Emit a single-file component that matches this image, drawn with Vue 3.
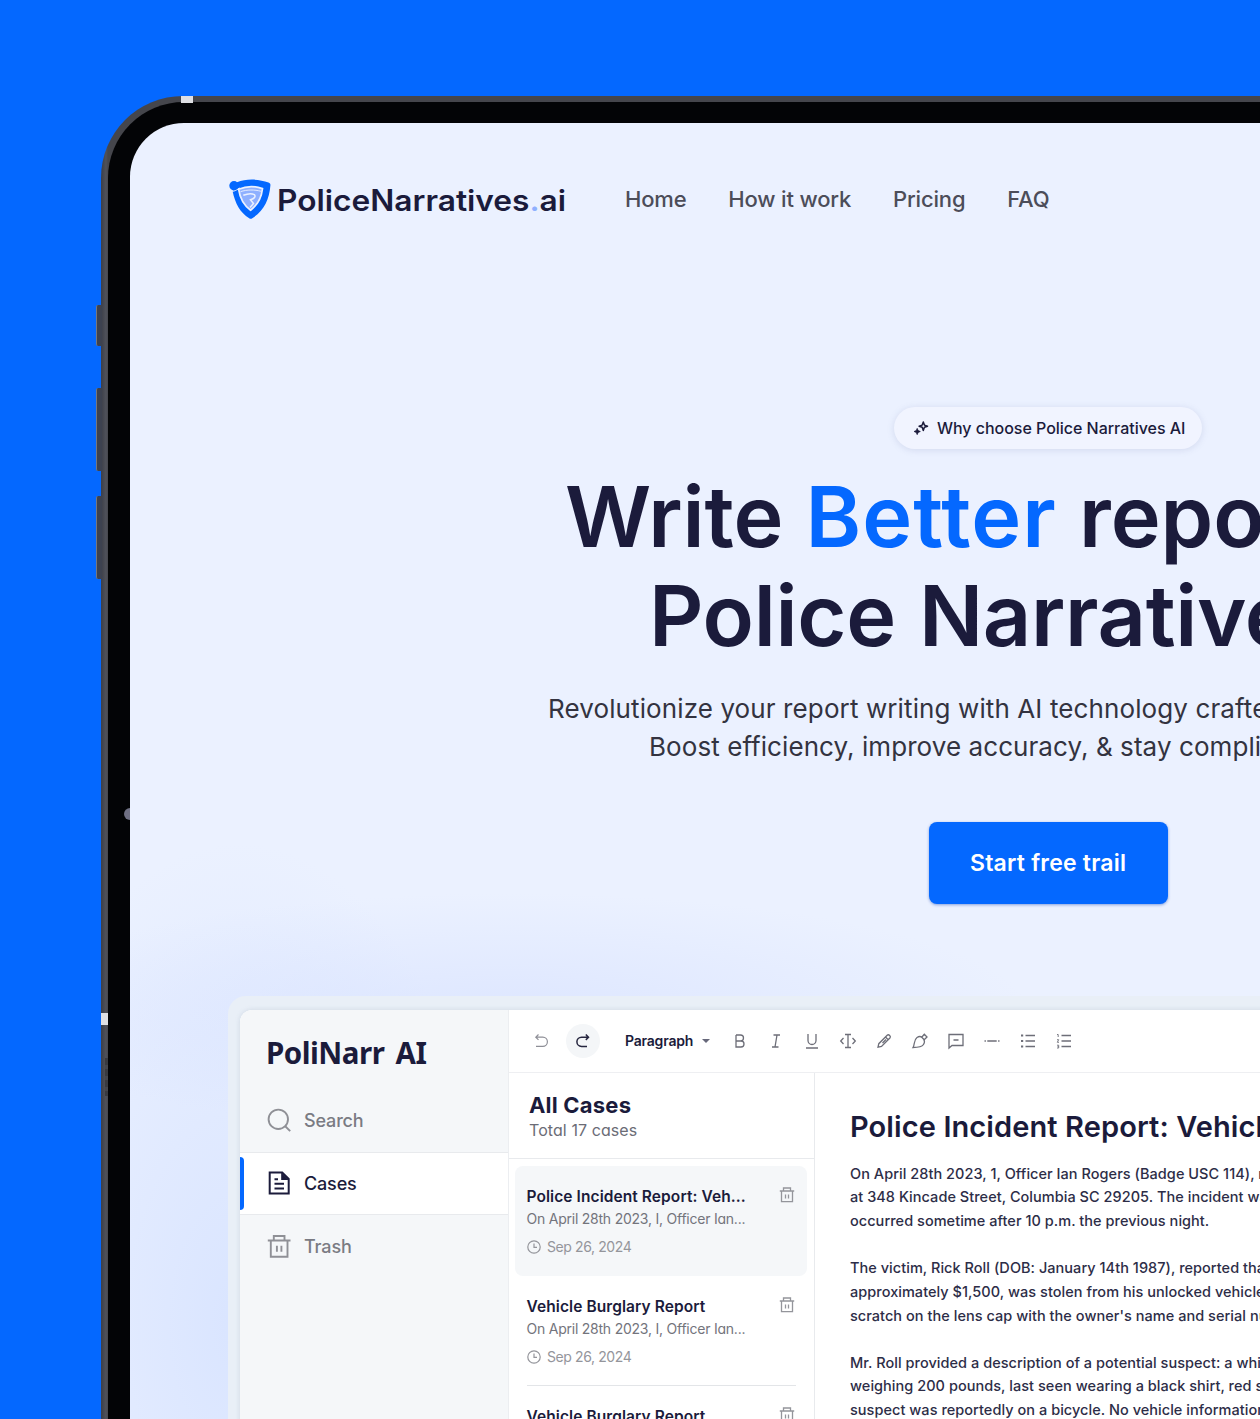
<script setup>
const links = ['Home', 'How it work', 'Pricing', 'FAQ']

const cases = [
  { title: 'Police Incident Report: Veh...', active: true },
  { title: 'Vehicle Burglary Report', active: false },
  { title: 'Vehicle Burglary Report', active: false },
]

const paragraphs = [
  [
    'On April 28th 2023, 1, Officer Ian Rogers (Badge USC 114), responded',
    'at 348 Kincade Street, Columbia SC 29205. The incident was reported',
    'occurred sometime after 10 p.m. the previous night.',
  ],
  [
    'The victim, Rick Roll (DOB: January 14th 1987), reported that a camera',
    'approximately $1,500, was stolen from his unlocked vehicle. It has a',
    "scratch on the lens cap with the owner's name and serial number.",
  ],
  [
    'Mr. Roll provided a description of a potential suspect: a white male',
    'weighing 200 pounds, last seen wearing a black shirt, red shorts. The',
    'suspect was reportedly on a bicycle. No vehicle information was given.',
  ],
]
</script>

<template>
  <div class="stage">
    <div class="tablet">
      <i class="side-button first"></i>
      <i class="side-button second"></i>
      <i class="side-button third"></i>
      <i class="antenna top"></i>
      <i class="antenna left"></i>
      <i class="vents"></i>
      <div class="bezel">
        <i class="camera"></i>
        <div class="screen">
          <header class="nav">
            <div class="brand">
              <svg width="42" height="40" viewBox="0 0 42 40">
                <path d="M8 3.200C17 -.4 30 -.2 39.500 3.600C41 4.200 41.600 5 41.400 6.600C40.400 20.500 34.500 32.500 23.300 39.200C22.200 39.900 21.200 39.900 20.200 39.200C11 33.500 6.200 24.500 3.600 12.200Z" fill="#0468ff" />
                <path d="M1 12.500C6 12.500 8 10.500 11 9" fill="none" stroke="#ebf1ff" stroke-width="1.300" />
                <path d="M9.600 10.200C17.500 6.900 26 6.900 33.500 9.600C32.500 18.500 28.500 26 21.600 31.200C14.800 26.500 11 19.500 9.600 10.200Z" fill="#8fb0ff" stroke="#ebf1ff" stroke-width="1.700" />
                <circle cx="5" cy="6.800" r="4.700" fill="#0468ff" />
                <path d="M11.500 12.700C18 10.500 25.500 10.500 32 12.300" fill="none" stroke="#ebf1ff" stroke-width=".9" />
                <path d="M14.300 16.300C18 14.800 23 14.400 25.300 15.600C27 17.600 25.500 19.600 21.500 20.800L24.500 24.500L21 28.500" fill="none" stroke="#ebf1ff" stroke-width="1.500" />
              </svg>
              <span class="brand-name">PoliceNarratives<b>.</b>ai</span>
            </div>
            <nav class="links">
              <a v-for="link in links" :key="link">{{ link }}</a>
            </nav>
          </header>

          <section class="hero">
            <div class="badge">
              <svg width="16" height="16" viewBox="0 0 16 16" fill="none" stroke="#1b1b3b" stroke-width="1.500" stroke-linejoin="round">
                <path d="M10.300 2L11.400 5.100L14.500 6.200L11.400 7.300L10.300 10.400L9.200 7.300L6.100 6.200L9.200 5.100Z" />
                <path d="M4.200 8.400L5.100 10.600L7.300 11.500L5.100 12.400L4.200 14.600L3.300 12.400L1.100 11.500L3.300 10.600Z" fill="#1b1b3b" stroke-width=".8" />
              </svg>
              <span>Why choose Police Narratives AI</span>
            </div>
            <h1>
              <span class="line-one">Write <em>Better</em> reports</span>
              <span class="line-two">Police Narratives</span>
            </h1>
            <p class="lead">
              <span class="lead-one">Revolutionize your report writing with AI technology crafted</span>
              <span class="lead-two">Boost efficiency, improve accuracy, &amp; stay compliant</span>
            </p>
            <button class="cta">Start free trail</button>
          </section>

          <div class="app-frame">
            <div class="app">
              <aside class="sidebar">
                <div class="side-logo">PoliNarr AI</div>
                <div class="side-item">
                  <svg width="24" height="24" viewBox="0 0 24 24" fill="none" stroke="#8f9096" stroke-width="1.900">
                    <circle cx="11.300" cy="11.300" r="9.700" />
                    <path d="M18 18L23.200 23.200" />
                  </svg>
                  <span>Search</span>
                </div>
                <div class="side-item active">
                  <svg width="24" height="24" viewBox="0 0 24 24" fill="none" stroke="#1b1b3b" stroke-width="2">
                    <path d="M2.700 1.500H15.200L21.700 8V22.500H2.700Z" />
                    <path d="M14.200 1.500V9H21.700Z" fill="#1b1b3b" stroke="none" />
                    <path d="M7.500 8.200H11M7.500 12.800H17M7.500 17.500H17" />
                  </svg>
                  <span>Cases</span>
                </div>
                <div class="side-item">
                  <svg width="24" height="24" viewBox="0 0 24 24" fill="none" stroke="#8f9096" stroke-width="1.900">
                    <path d="M.8 6.500H23.500M6.800 6.500V2H17.500V6.500M3.800 6.500V22.800H20.500V6.500M9.900 11.800V17.800M14.400 11.800V17.800" />
                  </svg>
                  <span>Trash</span>
                </div>
              </aside>

              <main class="workspace">
                <div class="toolbar">
                  <div class="tool">
                    <svg width="16" height="16" viewBox="0 0 16 16" fill="none" stroke="#8e8f97" stroke-width="1.200">
                      <path d="M5.500 1.500L2.800 4.200L5.500 6.900M2.800 4.200H9.800A4.600 4.600 0 0 1 9.800 13.400H3" />
                    </svg>
                  </div>
                  <div class="tool redo">
                    <svg width="16" height="16" viewBox="0 0 16 16" fill="none" stroke="#26263f" stroke-width="1.500">
                      <path d="M10.800 1.500L13.500 4.200L10.800 6.900M13.500 4.200H6.500A4.600 4.600 0 0 0 6.500 13.400H12" />
                    </svg>
                  </div>
                  <div class="style-select">
                    <span>Paragraph</span>
                    <i></i>
                  </div>
                  <div class="formatting">
                    <svg viewBox="0 0 18 18"><path d="M5 3V15H10A3 3 0 0 0 10 9H5M5 3H9.500A3 3 0 0 1 9.500 9" /></svg>
                    <svg viewBox="0 0 18 18"><path d="M6.500 3H13M5 15H11.500M10 3L8 15" /></svg>
                    <svg viewBox="0 0 18 18"><path d="M5 2V8.500A4 4 0 0 0 13 8.500V2M3 16H15" /></svg>
                    <svg viewBox="0 0 18 18"><path d="M9 2.500V15.500M6 2.500H12M6 15.500H12M4.500 6L1.700 9L4.500 12M13.500 6L16.300 9L13.500 12" /></svg>
                    <svg viewBox="0 0 18 18"><path d="M3 15.200L3.800 11.700L12.200 3.300C13.700 1.800 16.400 4.400 14.900 6L6.500 14.400L3 15.200ZM10.500 5L13.200 7.700M7.500 11L11 7.500" /></svg>
                    <svg viewBox="0 0 18 18"><path d="M2 15.500C4 12.500 2.500 8 6 5.500C8 4.200 10 4.500 11 5.500L12.700 7.200C13.800 9 13.500 11 12.500 12.500C10.500 15.500 6 15.500 2 15.500ZM10.700 5.200L13.300 2.300L16 5L13.200 7.700" /></svg>
                    <svg viewBox="0 0 18 18"><path d="M2 16V2.500H16V13.500H5L2 16ZM6.500 8H11.500" /></svg>
                    <svg viewBox="0 0 18 18"><path d="M4.300 9H13.700M1.500 9H2.900M15.100 9H16.500" /></svg>
                    <svg viewBox="0 0 18 18"><path d="M6.500 3.500H16M6.500 9H16M6.500 14.500H16" /><path d="M2 3.500H4.200M2 9H4.200M2 14.500H4.200" stroke-width="2.200" /></svg>
                    <svg viewBox="0 0 18 18"><path d="M6.500 3.500H16M6.500 9H16M6.500 14.500H16" /><path d="M2 2.500H3.200V5M2 7.700H3.700L2.300 10.300H4M2 13.200H3.700V16H2M2.500 14.600H3.700" stroke-width=".9" /></svg>
                  </div>
                </div>

                <div class="panes">
                  <section class="list">
                    <div class="list-head">
                      <h2>All Cases</h2>
                      <p>Total 17 cases</p>
                    </div>
                    <article v-for="(item, i) in cases" :key="i" class="case" :class="{ active: item.active }">
                      <div class="case-body">
                        <div class="case-text">
                          <h3>{{ item.title }}</h3>
                          <p>On April 28th 2023, I, Officer Ian...</p>
                        </div>
                        <svg class="bin" width="16" height="16" viewBox="0 0 16 16" fill="none" stroke="#94959b" stroke-width="1.300">
                          <path d="M.8 4H15.200M4.500 4V1H11.500V4M2.500 4V14.700H13.500V4M6.500 7.500V11.500M9.500 7.500V11.500" />
                        </svg>
                      </div>
                      <div class="date">
                        <svg width="14" height="14" viewBox="0 0 14 14" fill="none" stroke="#94959b" stroke-width="1.200">
                          <circle cx="7" cy="7" r="6.200" />
                          <path d="M7 3.500V7.400H10" />
                        </svg>
                        <span>Sep 26, 2024</span>
                      </div>
                    </article>
                  </section>

                  <section class="document">
                    <h2>Police Incident Report: Vehicle</h2>
                    <p v-for="(lines, i) in paragraphs" :key="i">
                      <span v-for="line in lines" :key="line">{{ line }}</span>
                    </p>
                  </section>
                </div>
              </main>
            </div>
          </div>
        </div>
      </div>
    </div>
  </div>
</template>

<style>
body {
  margin: 0;
}
</style>

<style scoped>
* {
  box-sizing: border-box;
}

h1,
h2,
h3,
p {
  margin: 0;
}

.stage {
  width: 1260px;
  height: 1419px;
  padding: 96px 0 0 101px;
  overflow: hidden;
  background: #0468ff;
  font-family: Inter, "Liberation Sans", sans-serif;
  color: #1b1b3b;
  white-space: nowrap;
}

/* device */
.tablet {
  position: relative;
  width: 1900px;
  height: 1500px;
  padding: 6px 0 0 7px;
  border-radius: 82px 0 0 0;
  background: linear-gradient(90deg, #3b3e48 0, #50525b 5px, #45464c 7px);
}

.bezel {
  position: relative;
  height: 100%;
  padding: 21px 0 0 22px;
  border-radius: 76px 0 0 0;
  background: #030406;
}

.side-button {
  position: absolute;
  left: -5px;
  width: 6px;
  border-left: 1px solid #77787d;
  border-radius: 2px 0 0 2px;
  background: #3d4250;
}

.side-button.first {
  top: 209px;
  height: 41px;
}

.side-button.second {
  top: 292px;
  height: 83px;
}

.side-button.third {
  top: 400px;
  height: 83px;
}

.antenna {
  position: absolute;
  background: #dfe0e4;
}

.antenna.top {
  left: 80px;
  top: 0;
  width: 12px;
  height: 7px;
  z-index: 1;
}

.antenna.left {
  left: 0;
  top: 917px;
  width: 7px;
  height: 12px;
}

.vents {
  position: absolute;
  left: 4px;
  top: 962px;
  width: 3px;
  height: 38px;
  background: repeating-linear-gradient(#393a3f 0 7px, #45464c 7px 11px);
}

.camera {
  position: absolute;
  left: 16px;
  top: 706px;
  width: 12px;
  height: 12px;
  border-radius: 50%;
  background: #6f7083;
}

.screen {
  position: relative;
  width: 1836px;
  height: 100%;
  border-radius: 54px 0 0 0;
  background:
    radial-gradient(ellipse 520px 120px at 380px 890px, rgba(208, 220, 255, .5), rgba(208, 220, 255, 0)),
    radial-gradient(ellipse 260px 480px at 110px 1200px, rgba(205, 220, 255, .6), rgba(205, 220, 255, 0)),
    #ebf1ff;
}

/* header */
.nav {
  display: flex;
  align-items: center;
  height: 152px;
  padding-left: 99px;
}

.brand {
  display: flex;
  align-items: center;
  width: 396px;
}

.brand-name {
  margin: 1px 0 0 6px;
  font-size: 29.500px;
  font-weight: 600;
  line-height: 36px;
  transform: scaleX(1.074);
  transform-origin: 0 50%;
}

.brand-name b {
  font-weight: 600;
  color: #8fb0ff;
}

.links {
  display: flex;
  gap: 41.800px;
  font-size: 22px;
  font-weight: 500;
  letter-spacing: -.16px;
  color: #4c4d59;
}

/* hero */
.hero {
  display: flex;
  flex-direction: column;
  align-items: flex-start;
}

.badge {
  display: flex;
  align-items: center;
  gap: 8px;
  width: 308px;
  height: 42px;
  margin: 132px 0 0 764px;
  padding-left: 19px;
  border-radius: 21px;
  background: #f1f4ff;
  box-shadow: 0 1px 7px rgba(110, 120, 170, .2);
  font-size: 16px;
  font-weight: 500;
  letter-spacing: -.03px;
}

h1 {
  margin-top: 18px;
  font-size: 84.500px;
  font-weight: 600;
  line-height: 98.800px;
}

h1 span,
.lead span,
.document p span {
  display: block;
}

h1 em {
  font-style: normal;
  letter-spacing: 1px;
  color: #0468ff;
}

.line-one {
  margin-left: 435px;
  letter-spacing: -.1px;
  word-spacing: 1px;
}

.line-two {
  margin-left: 519px;
  letter-spacing: -.3px;
  word-spacing: 2px;
}

.lead {
  margin-top: 25.500px;
  font-size: 26px;
  line-height: 37.800px;
  color: #333340;
}

.lead-one {
  margin-left: 418px;
  letter-spacing: .11px;
}

.lead-two {
  margin-left: 519px;
  letter-spacing: .07px;
}

.cta {
  width: 239px;
  height: 82px;
  margin: 56.400px 0 0 798.600px;
  padding: 1px 0 0;
  border: 0;
  border-radius: 8px;
  background: #0468ff;
  box-shadow: 0 1px 3px rgba(4, 60, 180, .45);
  color: #fff;
  font: 600 23px/81px Inter, "Liberation Sans", sans-serif;
  letter-spacing: .22px;
}

/* product preview */
.app-frame {
  width: 1640px;
  margin: 91.600px 0 0 98px;
  padding: 14px 12px;
  border-radius: 18px;
  background: #e9eff7;
}

.app {
  display: flex;
  height: 600px;
  border-radius: 12px;
  overflow: hidden;
  background: #fff;
  box-shadow: 0 0 5px rgba(110, 130, 160, .22);
}

.sidebar {
  width: 269px;
  border-right: 1px solid #eceef1;
  background: #f5f7f9;
}

.side-logo {
  height: 79px;
  padding: 22px 0 0 26px;
  font: 700 29.500px/42px "Noto Sans", sans-serif;
  letter-spacing: -.5px;
  word-spacing: 4px;
}

.side-item {
  display: flex;
  align-items: center;
  gap: 13px;
  height: 63px;
  padding-left: 27px;
  font-size: 18px;
  font-weight: 500;
  letter-spacing: -.15px;
  color: #7a7b83;
}

.side-item.active {
  position: relative;
  border: solid #e8eaed;
  border-width: 1px 0;
  background: #fff;
  color: #1b1b3b;
}

.side-item.active::before {
  content: "";
  position: absolute;
  left: 0;
  top: 4px;
  width: 4px;
  height: 53px;
  border-radius: 0 4px 4px 0;
  background: #0468ff;
}

.workspace {
  flex: 1;
}

.toolbar {
  display: flex;
  align-items: center;
  height: 63px;
  padding-left: 15px;
  border-bottom: 1px solid #eeeff2;
}

.tool {
  display: flex;
  align-items: center;
  justify-content: center;
  width: 34px;
  height: 34px;
  border-radius: 50%;
}

.tool.redo {
  margin-left: 8px;
  background: #f4f6f8;
}

.style-select {
  display: flex;
  align-items: center;
  width: 131px;
  padding-left: 25px;
  font-size: 14px;
  font-weight: 600;
  letter-spacing: -.2px;
}

.style-select i {
  margin-left: 9px;
  border: solid transparent;
  border-width: 4px 4px 0;
  border-top-color: #67687a;
}

.formatting {
  display: flex;
  gap: 18px;
}

.formatting svg {
  width: 18px;
  height: 18px;
  fill: none;
  stroke: #6d6e78;
  stroke-width: 1.300;
}

.panes {
  display: flex;
}

.list {
  width: 306px;
  height: 537px;
  border-right: 1px solid #e8eaed;
}

.list-head {
  height: 86px;
  margin-bottom: 7px;
  padding: 18px 0 0 20px;
  border-bottom: 1px solid #e8eaed;
}

.list-head h2 {
  font-size: 22px;
  font-weight: 700;
  line-height: 28px;
  letter-spacing: .2px;
}

.list-head p {
  font-size: 16px;
  line-height: 22px;
  letter-spacing: .08px;
  color: #6b6c76;
  font-feature-settings: "cv11";
}

.case {
  position: relative;
  width: 292px;
  height: 110px;
  margin-left: 6px;
  padding: 20px 12px 0;
  border-radius: 8px;
}

.case.active {
  background: #f5f7f9;
}

.case:not(.active)::after {
  content: "";
  position: absolute;
  left: 12px;
  right: 11px;
  bottom: 0;
  height: 1px;
  background: #e3e5e8;
}

.case-body {
  display: flex;
  justify-content: space-between;
}

.case-text {
  margin-left: -.5px;
}

.case h3 {
  font-size: 15.500px;
  font-weight: 600;
  line-height: 22px;
  letter-spacing: .08px;
}

.case p {
  font-size: 14px;
  line-height: 22px;
  letter-spacing: -.23px;
  color: #73747c;
  font-feature-settings: "cv11";
}

.bin {
  margin-top: 1px;
}

.date {
  display: flex;
  align-items: center;
  gap: 6px;
  margin-top: 7px;
  font-size: 14px;
  line-height: 20px;
  letter-spacing: -.4px;
  color: #94959b;
  font-feature-settings: "cv11";
}

.document {
  padding: 34px 0 0 35px;
}

.document h2 {
  margin-bottom: 15px;
  font-size: 29px;
  font-weight: 600;
  line-height: 40px;
  letter-spacing: .1px;
}

.document p {
  margin-bottom: 23.600px;
  font-size: 14.500px;
  font-weight: 500;
  line-height: 23.650px;
  letter-spacing: .04px;
  color: #2d2d47;
}
</style>
